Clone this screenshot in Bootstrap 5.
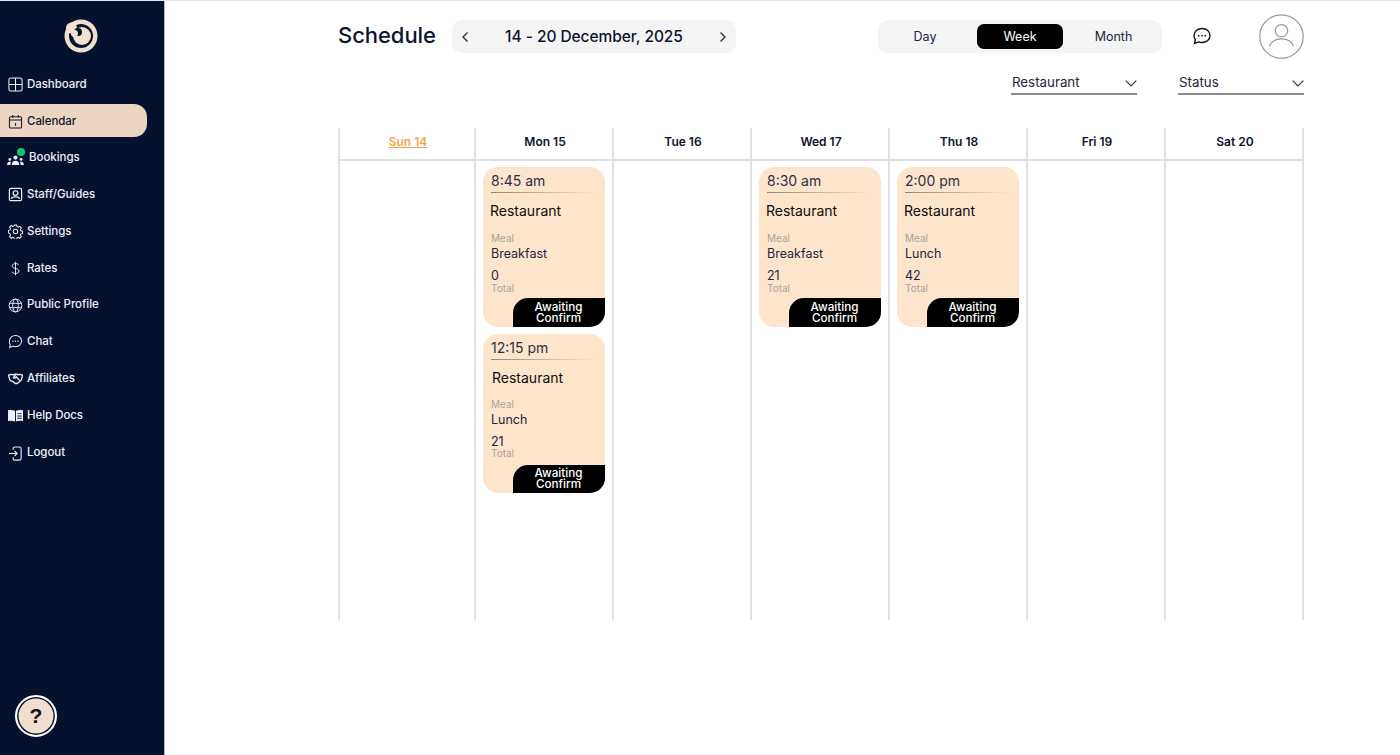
<!DOCTYPE html>
<html lang="en">
<head>
<meta charset="utf-8">
<title>Schedule</title>
<link href="https://cdn.jsdelivr.net/npm/bootstrap@5.3.0/dist/css/bootstrap.min.css" rel="stylesheet">
<style>
html,body{height:755px;overflow:hidden}
body{font-family:Inter,"Liberation Sans",sans-serif;color:#0b1430;background:#fff}
.shell{height:755px;border-top:1px solid #e6e8f0}
.side{width:165px;flex:none;background:#06112e;color:#eef0f6;border-right:1px solid #b9bcc6;height:754px;padding-top:17px}
.logo-wrap{height:36px;margin-bottom:13px;padding-right:3px}
.side-link{height:33px;margin-bottom:3.75px;width:147px;padding:2px 0 0 8px;font-size:11.5px;font-weight:500;color:#eef0f6;text-decoration:none;gap:4px;letter-spacing:-.05px}
.side-link svg{width:15px;height:15px;flex:none}
.side-link.on{background:#ecd5c2;color:#0b1430;border-radius:0 13px 13px 0}
.side-link.last{margin-top:1px}
.book-ic{position:relative;display:flex;margin-left:-1px}
.side-link .book-ic svg{width:17px}
.book-label{margin-left:1px}
.book-dot{position:absolute;width:8px;height:8px;background:#14c468;border-radius:50%;left:10px;top:-3px}
.help-btn{width:42px;height:42px;border-radius:50%;border:2.5px solid #fff;background:#f0dfd0;box-shadow:inset 0 0 0 1.5px #06112e;margin:0 0 18px 15px;font:700 21px "Liberation Sans",sans-serif;color:#111}
.main-col{padding:0 0 0 173px;width:1139px}
.title{font-size:22px;font-weight:500;margin:2px 0 0;width:114px;letter-spacing:-.05px}
.top-bar{height:70px;padding-top:19px;align-items:flex-start}
.week-pick{width:284px;height:33px;background:#f4f4f5;border-radius:10px;padding:0 9px;font-size:15.5px;font-weight:500;letter-spacing:-.05px}
.view-tabs{width:284px;height:33px;background:#f4f4f5;border-radius:10px;padding:4px 0;margin-left:142px;font-size:12.5px;color:#1c2542}
.view-tab{flex:1;border-radius:7px;padding-top:1px}
.tab-day{flex:0 0 99px;padding-right:5px}
.tab-week{flex:0 0 86px;background:#000;color:#fff}
.tab-month{padding-left:2px}
.msg-ic{width:20px;height:20px;margin:6px 0 0 30px}
.avatar{width:45px;height:45px;margin:-6px 0 0 47px}
.filter-row{gap:41px;height:25px;margin-top:-1px}
.filter-sel{width:126px;height:25px;border-bottom:2px solid #8a8a8a;font-size:13.3px;color:#1c2542;padding:3px 0 0 1px}
.cal{margin:33px 0 0;width:966px;height:492px}
.cal-col{width:138px;flex:none;border-right:2px solid #e0e0e2}
.cal-col:first-child{border-left:2px solid #e0e0e2}
.cal-head{height:33px;padding:0 0 3px 2px;border-bottom:2px solid #e0e0e2;font-size:12px;font-weight:600;color:#0b1430}
.cal-head.today{color:#f5a54a;text-decoration:underline}
.slot{padding:6px 0 0 7px;gap:7px}
.evt{width:122px;height:160px;background:#fde5cc;border-radius:15px;padding:5px 0 0 8px;color:#1c2542}
.evt.second{height:159px}
.evt-time{font-size:14px;line-height:18px;width:104px;height:20.5px;border-bottom:1px solid;border-image:linear-gradient(90deg,#8d8578,#fde5cc) 1;color:#2a3047}
.evt-place{font-size:14px;color:#0d0d0d;margin:9px 0 13.5px -1px;line-height:18px}
.second .evt-place{margin:9px 0 12.5px 1px}
.second .evt-val:not(.evt-meal){margin-bottom:-1px}
.evt-lab{font-size:10px;line-height:11px;color:#a7a3a0}
.evt-val{font-size:12.5px;line-height:14px}
.evt-meal{margin:3px 0 8px}
.evt-cap{margin-top:auto;align-self:flex-end;width:92px;height:29px;background:#000;color:#fff;font-size:11.7px;line-height:11px;font-weight:500;text-align:center;border-radius:15px 0 15px 0;padding:4px 17px 0 16px}
.second .evt-cap{height:28px;padding-top:3px}
</style>
</head>
<body>
<div class="shell d-flex">
  <aside class="side d-flex flex-column">
    <div class="logo-wrap d-flex justify-content-center">
      <svg width="36" height="36" viewBox="0 0 36 36"><circle cx="18" cy="18" r="16.500" fill="#efe0d0"/><circle cx="18" cy="18" r="12" fill="#06112e"/><circle cx="19" cy="18" r="9" fill="#efe0d0"/><circle cx="8.500" cy="10" r="5.500" fill="#efe0d0"/><circle cx="15" cy="14" r="4" fill="#06112e"/><circle cx="11.500" cy="15.500" r="3.500" fill="#efe0d0"/></svg>
    </div>
    <nav class="d-flex flex-column">
      <a class="side-link d-flex align-items-center" href="#"><svg viewBox="0 0 16 16" fill="none" stroke="currentColor" stroke-width="1.100"><rect x="1" y="1" width="14" height="14" rx="2"/><path d="M8 1v14M1 8h14"/></svg>Dashboard</a>
      <a class="side-link on d-flex align-items-center" href="#"><svg viewBox="0 0 16 16" fill="none" stroke="currentColor" stroke-width="1.100"><rect x="1.500" y="3" width="13" height="12" rx="1.500"/><path d="M1.500 6.500h13M5 1v3M11 1v3M8 9.500v3"/></svg>Calendar</a>
      <a class="side-link d-flex align-items-center" href="#"><span class="book-ic"><svg viewBox="0 0 18 16" fill="currentColor"><circle cx="9" cy="7" r="2.200"/><path d="M5 15c0-3 1.500-4.500 4-4.500s4 1.500 4 4.500z"/><circle cx="3" cy="9" r="1.500"/><path d="M0 15c0-2 1-3.500 3-3.500 1 0 1.300.3 1.300.3-.6 1-.8 2-.8 3.200z"/><circle cx="15" cy="9" r="1.500"/><path d="M18 15c0-2-1-3.500-3-3.500-1 0-1.300.3-1.300.3.6 1 .8 2 .8 3.200z"/></svg><span class="book-dot"></span></span><span class="book-label">Bookings</span></a>
      <a class="side-link d-flex align-items-center" href="#"><svg viewBox="0 0 16 16" fill="none" stroke="currentColor" stroke-width="1.300"><rect x="1.500" y="1.500" width="13" height="13" rx="1.500"/><circle cx="8" cy="6.500" r="2.500"/><path d="M3.500 12.500c1-2.500 8-2.500 9 0"/></svg>Staff/Guides</a>
      <a class="side-link d-flex align-items-center" href="#"><svg viewBox="0 0 16 16" fill="none" stroke="currentColor" stroke-width="1.100"><circle cx="8" cy="8" r="2.400"/><path d="M6.800 1h2.400l.4 1.900 1.300.6 1.700-1 1.600 1.700-1 1.600.6 1.400 1.700.5v2.400l-1.700.4-.6 1.400 1 1.600-1.700 1.700-1.600-1-1.300.6-.4 1.700H6.800l-.4-1.700-1.300-.6-1.700 1-1.700-1.700 1-1.600-.6-1.400L.4 9.200V6.800l1.700-.5.6-1.400-1-1.600 1.700-1.700 1.700 1 1.300-.6z"/></svg>Settings</a>
      <a class="side-link d-flex align-items-center" href="#"><svg viewBox="0 0 16 16" fill="none" stroke="currentColor" stroke-width="1"><path d="M11.500 4.500C11 3.200 9.700 2.800 8 2.800c-2 0-3.500.9-3.500 2.500S6 7.500 8 8s3.700 1 3.700 2.700S10 13.300 8 13.300c-1.900 0-3.300-.6-3.800-2M8 .8v14.400"/></svg>Rates</a>
      <a class="side-link d-flex align-items-center" href="#"><svg viewBox="0 0 16 16" fill="none" stroke="currentColor" stroke-width="1"><circle cx="8" cy="8" r="6.800"/><ellipse cx="8" cy="8" rx="3" ry="6.800"/><path d="M1.500 5.700h13M1.500 10.300h13"/></svg>Public Profile</a>
      <a class="side-link d-flex align-items-center" href="#"><svg viewBox="0 0 16 16" fill="none" stroke="currentColor" stroke-width="1.100"><path d="M8 1.500c3.600 0 6.500 2.600 6.500 6s-2.900 6-6.500 6c-1 0-2-.2-2.900-.6L1.800 14.500l.5-3.200A5.800 5.800 0 0 1 1.500 7.500c0-3.400 2.900-6 6.500-6z"/><path d="M5.300 7.700h.01M8 7.700h.01M10.700 7.700h.01" stroke-width="1.500" stroke-linecap="round"/></svg>Chat</a>
      <a class="side-link d-flex align-items-center" href="#"><svg viewBox="0 0 18 14" fill="none" stroke="currentColor" stroke-width="1.600"><path d="M.5 3l3-1 3 .5L9 1.500l3 1 2.500-.5 3 1-1.500 6-2 1.500-3 2.500H9L5.500 10.500l-3-1z"/><path d="M9 2.500 6.500 6c1 1 2.500.5 3.500-1l4 4.500"/></svg>Affiliates</a>
      <a class="side-link d-flex align-items-center" href="#"><svg viewBox="0 0 16 14" fill="currentColor"><path d="M0 1.500c2.500-.8 5-.5 7.500.5v11.500C5 12.500 2.500 12.200 0 13z"/><path fill-rule="evenodd" d="M8.500 2c2.300-1 4.700-1.300 7.500-.5V13c-2.800-.8-5.200-.5-7.500.5zM10 4.500v1h4.500v-1zm0 2.500v1h4.500V7zm0 2.500v1h4.500v-1z"/></svg>Help Docs</a>
      <a class="side-link last d-flex align-items-center" href="#"><svg viewBox="0 0 16 16" fill="none" stroke="currentColor" stroke-width="1.200"><path d="M5.500 4V2.500A1.500 1.500 0 0 1 7 1h5a2 2 0 0 1 2 2v10a2 2 0 0 1-2 2H7a1.500 1.500 0 0 1-1.500-1.500V12M1 8h8.500M7 5.300 9.700 8 7 10.700"/></svg>Logout</a>
    </nav>
    <div class="help-btn mt-auto d-flex align-items-center justify-content-center">?</div>
  </aside>
  <main class="main-col">
    <div class="top-bar d-flex">
      <h1 class="title">Schedule</h1>
      <div class="week-pick d-flex align-items-center justify-content-between">
        <svg width="8" height="12" viewBox="0 0 8 12" fill="none" stroke="#333" stroke-width="1.400"><path d="M6.500 1.500 2 6l4.500 4.500"/></svg>
        <span>14 - 20 December, 2025</span>
        <svg width="8" height="12" viewBox="0 0 8 12" fill="none" stroke="#333" stroke-width="1.400"><path d="M1.500 1.500 6 6l-4.500 4.500"/></svg>
      </div>
      <div class="view-tabs d-flex align-items-stretch">
        <div class="view-tab tab-day d-flex align-items-center justify-content-center">Day</div>
        <div class="view-tab tab-week d-flex align-items-center justify-content-center">Week</div>
        <div class="view-tab tab-month d-flex align-items-center justify-content-center">Month</div>
      </div>
      <svg class="msg-ic" viewBox="0 0 20 20" fill="none" stroke="#111" stroke-width="1.400"><path d="M10 2.500c4.600 0 8 3 8 7s-3.400 7-8 7c-1.200 0-2.300-.2-3.300-.6L2.500 17.500l.8-3.800A6.600 6.600 0 0 1 2 9.500c0-4 3.400-7 8-7z"/><path d="M6.700 9.700h.01M10 9.700h.01M13.300 9.700h.01" stroke-width="1.700" stroke-linecap="round"/></svg>
      <svg class="avatar" viewBox="0 0 47 47" fill="none" stroke="#8f9ca6" stroke-width="1.300"><circle cx="23.500" cy="23.500" r="22.700"/><circle cx="23.500" cy="17.500" r="6.500"/><path d="M11 34c2-6 7-8 12.500-8S34 28 36 34"/></svg>
    </div>
    <div class="filter-row d-flex justify-content-end">
      <div class="filter-sel d-flex align-items-center justify-content-between">Restaurant<svg width="12" height="7" viewBox="0 0 12 7" fill="none" stroke="#333" stroke-width="1.100"><path d="M.7.7 6 6 11.300.7"/></svg></div>
      <div class="filter-sel d-flex align-items-center justify-content-between">Status<svg width="12" height="7" viewBox="0 0 12 7" fill="none" stroke="#333" stroke-width="1.100"><path d="M.7.7 6 6 11.300.7"/></svg></div>
    </div>
    <div class="cal d-flex">
      <div class="cal-col"><div class="cal-head today d-flex align-items-center justify-content-center">Sun 14</div></div>
      <div class="cal-col"><div class="cal-head d-flex align-items-center justify-content-center">Mon 15</div>
        <div class="slot d-flex flex-column">
          <div class="evt d-flex flex-column"><div class="evt-time">8:45 am</div><div class="evt-place">Restaurant</div><div class="evt-lab">Meal</div><div class="evt-val evt-meal">Breakfast</div><div class="evt-val">0</div><div class="evt-lab">Total</div><div class="evt-cap">Awaiting Confirm</div></div>
          <div class="evt second d-flex flex-column"><div class="evt-time">12:15 pm</div><div class="evt-place">Restaurant</div><div class="evt-lab">Meal</div><div class="evt-val evt-meal">Lunch</div><div class="evt-val">21</div><div class="evt-lab">Total</div><div class="evt-cap">Awaiting Confirm</div></div>
        </div></div>
      <div class="cal-col"><div class="cal-head d-flex align-items-center justify-content-center">Tue 16</div></div>
      <div class="cal-col"><div class="cal-head d-flex align-items-center justify-content-center">Wed 17</div>
        <div class="slot d-flex flex-column">
          <div class="evt d-flex flex-column"><div class="evt-time">8:30 am</div><div class="evt-place">Restaurant</div><div class="evt-lab">Meal</div><div class="evt-val evt-meal">Breakfast</div><div class="evt-val">21</div><div class="evt-lab">Total</div><div class="evt-cap">Awaiting Confirm</div></div>
        </div></div>
      <div class="cal-col"><div class="cal-head d-flex align-items-center justify-content-center">Thu 18</div>
        <div class="slot d-flex flex-column">
          <div class="evt d-flex flex-column"><div class="evt-time">2:00 pm</div><div class="evt-place">Restaurant</div><div class="evt-lab">Meal</div><div class="evt-val evt-meal">Lunch</div><div class="evt-val">42</div><div class="evt-lab">Total</div><div class="evt-cap">Awaiting Confirm</div></div>
        </div></div>
      <div class="cal-col"><div class="cal-head d-flex align-items-center justify-content-center">Fri 19</div></div>
      <div class="cal-col"><div class="cal-head d-flex align-items-center justify-content-center">Sat 20</div></div>
    </div>
  </main>
</div>
<script src="https://cdn.jsdelivr.net/npm/bootstrap@5.3.0/dist/js/bootstrap.bundle.min.js"></script>
</body>
</html>
